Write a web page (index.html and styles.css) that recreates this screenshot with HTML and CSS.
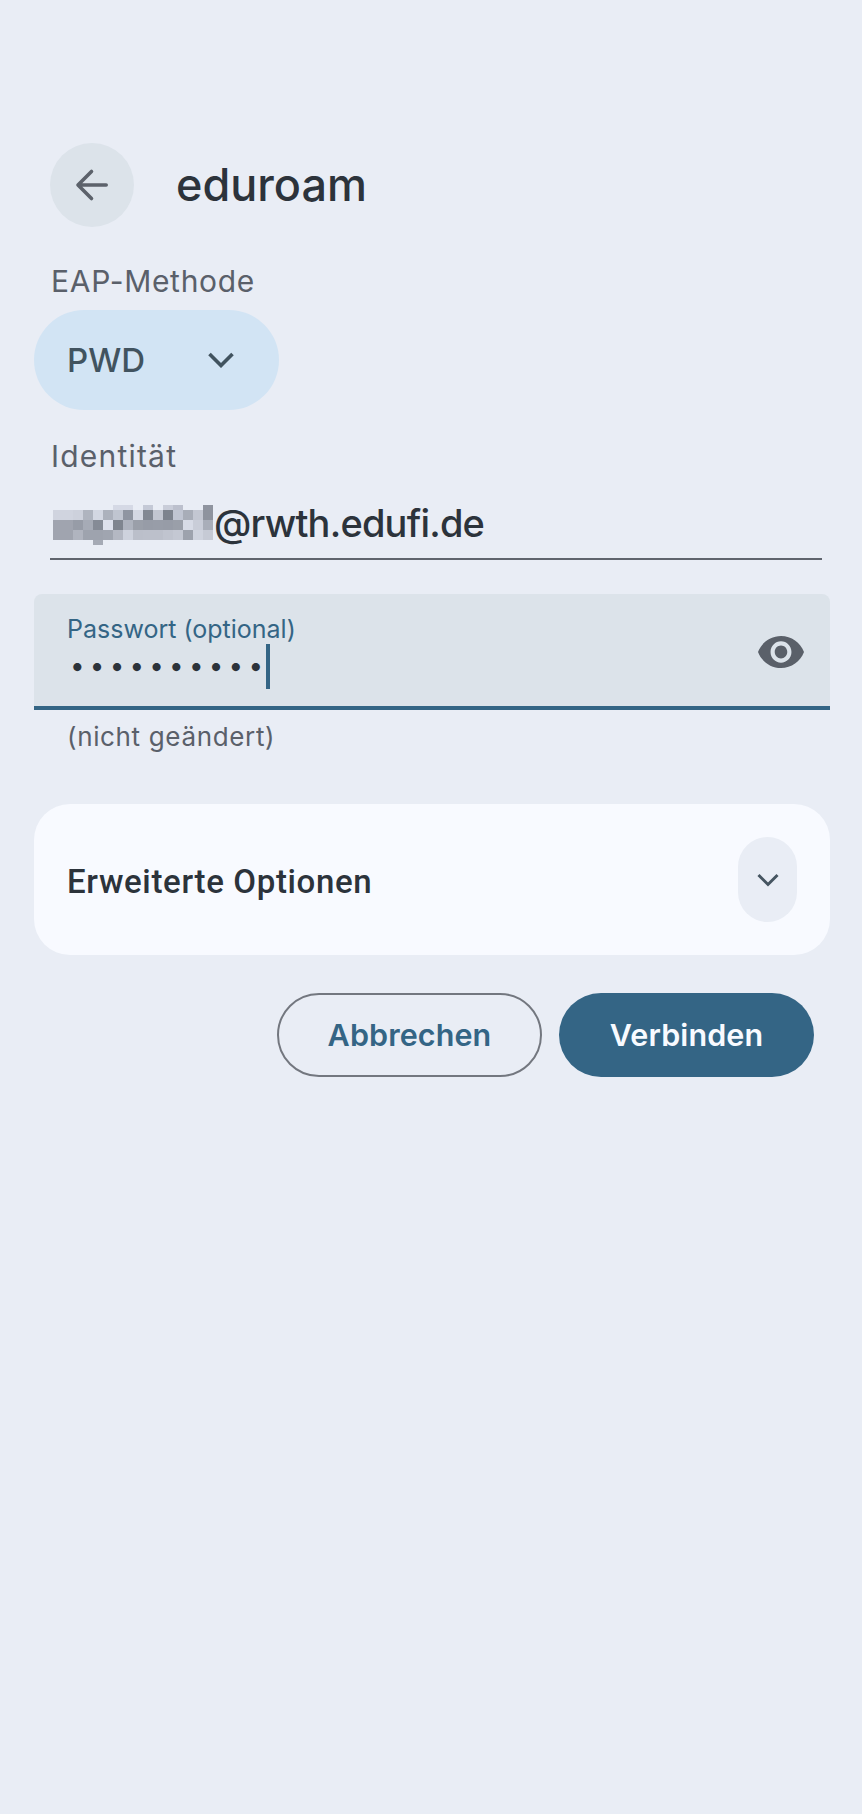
FILE: index.html
```html
<!DOCTYPE html>
<html lang="de">
<head>
<meta charset="utf-8">
<title>eduroam</title>
<link rel="stylesheet" href="styles.css">
</head>
<body>
<main class="page">
  <header class="top">
    <button class="back" aria-label="Zurück">
      <svg width="40" height="40" viewBox="0 0 40 40" fill="none" stroke="#5c626b" stroke-width="3.6" stroke-linecap="round" stroke-linejoin="round"><path d="M34.200 20H6.500M19.500 6.500 6 20 19.500 33.500"/></svg>
    </button>
    <h1 class="title">eduroam</h1>
  </header>

  <div class="indent label eap">EAP-Methode</div>
  <div class="chip">
    <span>PWD</span>
    <svg class="chip-chev" width="26" height="16" viewBox="0 0 26 16" fill="none" stroke="#41535f" stroke-width="3.600"><path d="M1.500 2 13 13.500 24.500 2"/></svg>
  </div>

  <div class="indent label ident">Identität</div>
  <div class="indent identity">
    <svg class="mosaic" width="160" height="40" viewBox="0 0 160 40" shape-rendering="crispEdges">
      <g>
        <rect x="60" y="0" width="10" height="5" fill="#d5d9e5"/><rect x="70" y="0" width="10" height="5" fill="#d5d9e5"/><rect x="90" y="0" width="10" height="5" fill="#c4c9d6"/><rect x="110" y="0" width="10" height="5" fill="#c9cdd9"/><rect x="120" y="0" width="10" height="5" fill="#bcc0cd"/><rect x="150" y="0" width="10" height="5" fill="#8f949f"/>
      </g>
      <g>
        <rect x="0" y="5" width="10" height="10" fill="#d0d4df"/><rect x="10" y="5" width="10" height="10" fill="#d0d4df"/><rect x="20" y="5" width="10" height="10" fill="#cdd1dc"/><rect x="30" y="5" width="10" height="10" fill="#afb4bf"/><rect x="40" y="5" width="10" height="10" fill="#d3d7e2"/><rect x="50" y="5" width="10" height="10" fill="#acb1bc"/><rect x="60" y="5" width="10" height="10" fill="#c0c5d0"/><rect x="70" y="5" width="10" height="10" fill="#8f95a1"/><rect x="80" y="5" width="10" height="10" fill="#d4d8e3"/><rect x="90" y="5" width="10" height="10" fill="#828893"/><rect x="100" y="5" width="10" height="10" fill="#c2c6d1"/><rect x="110" y="5" width="10" height="10" fill="#7d838e"/><rect x="120" y="5" width="10" height="10" fill="#c0c5d2"/><rect x="130" y="5" width="10" height="10" fill="#a8adb8"/><rect x="140" y="5" width="10" height="10" fill="#c3c7d2"/><rect x="150" y="5" width="10" height="10" fill="#8e939e"/>
      </g>
      <g>
        <rect x="0" y="15" width="10" height="10" fill="#a0a4af"/><rect x="10" y="15" width="10" height="10" fill="#a0a4af"/><rect x="20" y="15" width="10" height="10" fill="#979ca7"/><rect x="30" y="15" width="10" height="10" fill="#a6abb6"/><rect x="40" y="15" width="10" height="10" fill="#858b96"/><rect x="50" y="15" width="10" height="10" fill="#dde1ec"/><rect x="60" y="15" width="10" height="10" fill="#7f858f"/><rect x="70" y="15" width="10" height="10" fill="#aeb3be"/><rect x="80" y="15" width="10" height="10" fill="#9a9fa9"/><rect x="90" y="15" width="10" height="10" fill="#979ca7"/><rect x="100" y="15" width="10" height="10" fill="#989da8"/><rect x="110" y="15" width="10" height="10" fill="#979ca7"/><rect x="120" y="15" width="10" height="10" fill="#9a9fa9"/><rect x="130" y="15" width="10" height="10" fill="#d7dbe6"/><rect x="140" y="15" width="10" height="10" fill="#c9cdd8"/><rect x="150" y="15" width="10" height="10" fill="#a9aeb9"/>
      </g>
      <g>
        <rect x="0" y="25" width="10" height="10" fill="#a0a4af"/><rect x="10" y="25" width="10" height="10" fill="#a0a4af"/><rect x="20" y="25" width="10" height="10" fill="#b0b4bf"/><rect x="30" y="25" width="10" height="10" fill="#9ea3ae"/><rect x="40" y="25" width="10" height="10" fill="#9ea3ae"/><rect x="50" y="25" width="10" height="10" fill="#a0a5b0"/><rect x="60" y="25" width="10" height="10" fill="#b4b8c3"/><rect x="70" y="25" width="10" height="10" fill="#ced2dd"/><rect x="80" y="25" width="10" height="10" fill="#bbbfca"/><rect x="90" y="25" width="10" height="10" fill="#bcc0cb"/><rect x="100" y="25" width="10" height="10" fill="#bcc0cb"/><rect x="110" y="25" width="10" height="10" fill="#c0c4cf"/><rect x="120" y="25" width="10" height="10" fill="#c4c8d3"/><rect x="130" y="25" width="10" height="10" fill="#9da2ad"/><rect x="140" y="25" width="10" height="10" fill="#cfd3de"/><rect x="150" y="25" width="10" height="10" fill="#c6cad5"/>
      </g>
      <rect x="40" y="35" width="10" height="5" fill="#a5aab5"/>
    </svg>
    <span class="identity-text">@rwth.edufi.de</span>
  </div>

  <div class="field">
    <div class="field-body">
      <div class="field-label">Passwort (optional)</div>
      <div class="field-value"><span class="dots">••••••••••</span><span class="caret"></span></div>
    </div>
    <svg class="eye" width="46" height="32" viewBox="1 4.500 22 15" preserveAspectRatio="none"><path fill="#5a6069" d="M12 4.500C7 4.500 2.730 7.610 1 12c1.730 4.390 6 7.500 11 7.500s9.270-3.110 11-7.500c-1.730-4.390-6-7.500-11-7.500zM12 17c-2.760 0-5-2.240-5-5s2.240-5 5-5 5 2.240 5 5-2.240 5-5 5zm0-8c-1.660 0-3 1.340-3 3s1.340 3 3 3 3-1.340 3-3-1.340-3-3-3z"/></svg>
  </div>
  <div class="helper">(nicht geändert)</div>

  <section class="card">
    <span class="card-title">Erweiterte Optionen</span>
    <span class="card-btn">
      <svg width="22" height="14" viewBox="0 0 22 14" fill="none" stroke="#465561" stroke-width="3"><path d="M1.500 2 11 11.500 20.500 2"/></svg>
    </span>
  </section>

  <div class="actions">
    <button class="btn btn-outline">Abbrechen</button>
    <button class="btn btn-filled">Verbinden</button>
  </div>
</main>
</body>
</html>
```

FILE: styles.css
```css
* { box-sizing: border-box; }
html, body { margin: 0; padding: 0; }
body {
  width: 862px;
  height: 1814px;
  background: #e9edf5;
  font-family: Inter, "Noto Sans", sans-serif;
  overflow: hidden;
}
.page { padding: 143px 32px 0 34px; display: flex; flex-direction: column; }

.top { display: flex; align-items: center; padding-left: 16px; height: 84px; }
.back {
  width: 84px; height: 84px; border: 0; border-radius: 50%;
  background: #dce3ea; display: flex; align-items: center; justify-content: center;
  padding: 0;
}
.title {
  margin: 0 0 0 42px; font-size: 45px; line-height: 50px; font-weight: 500;
  color: #2c333b; letter-spacing: 0;
}

.indent { margin-left: 17px; }
.label { font-size: 30px; line-height: 36px; color: #5a606a; font-weight: 400; letter-spacing: 0.7px; }
.eap { margin-top: 36px; }

.chip {
  margin-top: 11px; width: 245px; height: 100px; border-radius: 50px;
  background: #d2e4f4; color: #41535f; font-size: 33px; line-height: 40px; font-weight: 450;
  display: flex; align-items: center; padding-left: 33px;
}
.chip-chev { margin-left: 63px; }

.ident { margin-top: 28px; letter-spacing: 1.2px; }
.identity {
  margin-top: 26px; margin-left: 16px; width: 772px; height: 60px; border-bottom: 2px solid #5f646d;
  display: flex; align-items: flex-start; padding-left: 3px;
}
.mosaic { flex: none; margin-top: 5px; }
.identity-text { font-size: 38px; line-height: 46px; color: #2c333b; margin-left: 1px; letter-spacing: -0.8px; font-weight: 450; }

.field {
  margin-top: 34px; height: 116px; border-radius: 8px 8px 0 0; background: #dce3ea;
  border-bottom: 4px solid #346585;
  display: flex; align-items: center; justify-content: space-between;
  padding: 0 26px 0 33px;
}
.field-body { display: flex; flex-direction: column; padding-top: 2px; }
.field-label { font-size: 25px; line-height: 30px; color: #346585; }
.field-value { display: flex; align-items: center; height: 46px; margin-top: -1px; padding-left: 3px; }
.dots { font-size: 26px; line-height: 46px; letter-spacing: 5.2px; color: #2c333b; }
.caret { width: 4px; height: 45px; margin: 2px 0 0 -2px; background: #346585; }
.eye { flex: none; margin-top: 4px; }

.helper { margin: 12px 0 0 33px; font-size: 26px; line-height: 30px; color: #5a606a; letter-spacing: 0.65px; font-weight: 400; }

.card {
  margin-top: 52px; height: 151px; border-radius: 36px; background: #f8faff;
  display: flex; align-items: center; justify-content: space-between;
  padding: 0 33px 0 33px;
}
.card-title { font-family: Roboto, sans-serif; font-weight: 500; font-size: 33px; letter-spacing: 0.65px; color: #2c333b; padding-top: 3px; }
.card-btn {
  width: 59px; height: 85px; border-radius: 30px; background: #e9edf5;
  display: flex; align-items: center; justify-content: center;
}

.actions { margin-top: 38px; display: flex; justify-content: flex-end; gap: 17px; padding-right: 16px; }
.btn {
  height: 84px; border-radius: 42px; font-family: inherit; font-size: 30.5px; font-weight: 600; letter-spacing: 0.1px;
  padding: 0 0 2px; display: flex; align-items: center; justify-content: center;
}
.btn-outline { width: 265px; border: 2px solid #73777f; background: transparent; color: #346585; }
.btn-filled { width: 255px; border: 0; background: #346585; color: #f8faff; }
```
